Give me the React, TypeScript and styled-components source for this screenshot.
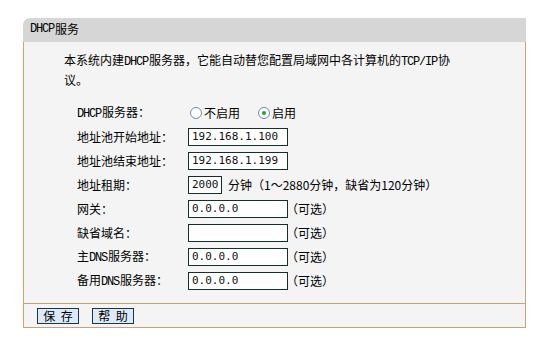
import React, { FunctionComponent } from "react";
import styled, { createGlobalStyle } from "styled-components";

const GlobalStyle = createGlobalStyle`
  html, body {
    margin: 0;
    padding: 0;
    background: #fff;
  }
  body {
    font-family: "Noto Sans CJK SC", "Liberation Sans", sans-serif;
    font-size: 12px;
    color: #000;
  }
`;

type TSField = {
    label: React.ReactNode,
    value?: string,
    width?: number,
    note?: string,
}

const App: FunctionComponent = () => {

    const fields: TSField[] = [
        { label: "地址池开始地址：", value: "192.168.1.100" },
        { label: "地址池结束地址：", value: "192.168.1.199" },
        { label: "地址租期：", value: "2000", width: 34, note: "分钟（1～2880分钟，缺省为120分钟）" },
        { label: "网关：", value: "0.0.0.0", note: "（可选）" },
        { label: "缺省域名：", value: "", note: "（可选）" },
        { label: <>主<Mono>DNS</Mono>服务器：</>, value: "0.0.0.0", note: "（可选）" },
        { label: <>备用<Mono>DNS</Mono>服务器：</>, value: "0.0.0.0", note: "（可选）" },
    ];

    return (
        <>
            <GlobalStyle />
            <Panel>
                <Header><Mono>DHCP</Mono>服务</Header>
                <Body>
                    <Intro>
                        本系统内建<Mono>DHCP</Mono>服务器，它能自动替您配置局域网中各计算机的<Mono>TCP/IP</Mono>协<br />议。
                    </Intro>
                    <Form>
                        <Row>
                            <Label><Mono>DHCP</Mono>服务器：</Label>
                            <Field>
                                <RadioOption>
                                    <Radio />不启用
                                </RadioOption>
                                <RadioOption>
                                    <Radio $checked />启用
                                </RadioOption>
                            </Field>
                        </Row>
                        {fields.map((f, i) =>
                            <Row key={i}>
                                <Label>{f.label}</Label>
                                <Field>
                                    <TextBox $width={f.width || 100}>{f.value}</TextBox>
                                    {f.note && <Note $lease={!!f.width}>{f.note}</Note>}
                                </Field>
                            </Row>
                        )}
                    </Form>
                </Body>
                <Footer>
                    <Button>保 存</Button>
                    <Button>帮 助</Button>
                </Footer>
            </Panel>
        </>
    )
}

// STYLED COMPONENTS //
const Panel = styled.div({
    width: 503,
    marginLeft: 23,
    marginTop: 18,
    display: 'flex',
    flexDirection: 'column',
});
// SimSun-like half-width latin
const Mono = styled.span({
    fontFamily: '"Liberation Mono", monospace',
    fontSize: 12,
    letterSpacing: -1.2,
    marginRight: 1,
});
const Header = styled.div({
    height: 24,
    background: '#d6d6d6',
    borderTopLeftRadius: 7,
    paddingLeft: 7,
    paddingBottom: 2,
    boxSizing: 'border-box',
    display: 'flex',
    alignItems: 'center',
    lineHeight: '14px',
});
const Body = styled.div({
    background: '#f4f4f4',
    borderLeft: '1px solid #e2a25c',
    borderRight: '1px solid #cba074',
    paddingTop: 9,
    paddingBottom: 10,
});
const Intro = styled.p({
    margin: 0,
    paddingLeft: 40,
    lineHeight: '18px',
});
const Form = styled.div({
    marginTop: 12,
    paddingLeft: 53,
    display: 'flex',
    flexDirection: 'column',
});
const Row = styled.div({
    height: 24,
    display: 'grid',
    gridTemplateColumns: '111px 1fr',
    alignItems: 'center',
    lineHeight: '16px',
});
const Label = styled.div({
    whiteSpace: 'nowrap',
});
const Field = styled.div({
    display: 'flex',
    alignItems: 'center',
});
const RadioOption = styled.label({
    display: 'inline-flex',
    alignItems: 'center',
    gap: 2,
    marginLeft: 2,
    marginRight: 16,
});
const Radio = styled.span<{ $checked?: boolean }>((props) => ({
    width: 12,
    height: 12,
    boxSizing: 'border-box',
    borderRadius: '50%',
    border: '1px solid #6f8ca8',
    background: '#fff',
    display: 'inline-flex',
    alignItems: 'center',
    justifyContent: 'center',
    '&::after': {
        content: '""',
        width: 4,
        height: 4,
        borderRadius: '50%',
        background: props.$checked ? '#23a523' : 'transparent',
    },
}));
const TextBox = styled.div<{ $width: number }>((props) => ({
    width: props.$width,
    height: 18,
    boxSizing: 'border-box',
    border: '1px solid #14302c',
    background: '#fff',
    paddingLeft: 3,
    fontFamily: '"DejaVu Sans Mono", monospace',
    fontSize: 11,
    lineHeight: '16px',
    color: '#111',
}));
const Note = styled.span<{ $lease: boolean }>((props) => ({
    marginLeft: props.$lease ? 6 : -2,
    whiteSpace: 'nowrap',
}));
const Footer = styled.div({
    height: 25,
    background: '#f4f4f4',
    borderTop: '1px solid #cba074',
    borderLeft: '1px solid #e2a25c',
    borderRight: '1px solid #cba074',
    borderBottom: '1px solid #cba074',
    display: 'flex',
    alignItems: 'flex-start',
    gap: 13,
    paddingLeft: 13,
    paddingTop: 4,
    boxSizing: 'border-box',
});
const Button = styled.button({
    height: 16,
    width: 42,
    padding: 0,
    background: '#dce9f7',
    border: '1px solid #1e3346',
    borderRadius: 0,
    fontFamily: '"Noto Sans CJK SC", sans-serif',
    fontSize: 12,
    lineHeight: '14px',
    color: '#000',
    whiteSpace: 'pre',
    wordSpacing: 3,
});

export default App;
